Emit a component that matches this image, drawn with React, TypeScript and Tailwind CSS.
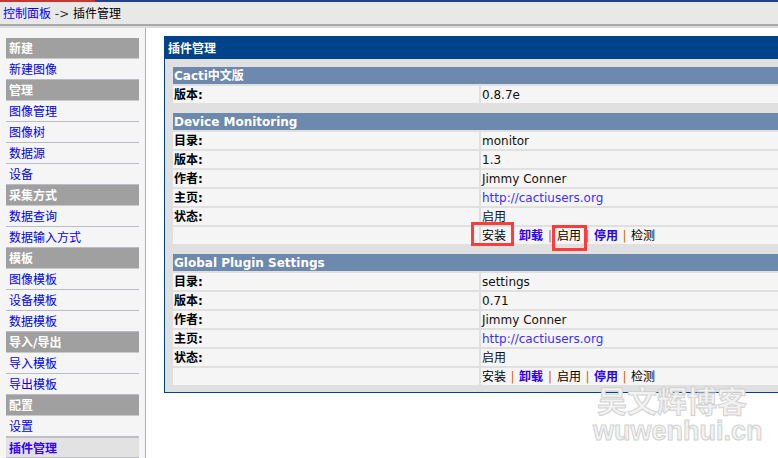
const menu: { label: string; head?: boolean; active?: boolean }[] = [
  { label: '新建', head: true },
  { label: '新建图像' },
  { label: '管理', head: true },
  { label: '图像管理' },
  { label: '图像树' },
  { label: '数据源' },
  { label: '设备' },
  { label: '采集方式', head: true },
  { label: '数据查询' },
  { label: '数据输入方式' },
  { label: '模板', head: true },
  { label: '图像模板' },
  { label: '设备模板' },
  { label: '数据模板' },
  { label: '导入/导出', head: true },
  { label: '导入模板' },
  { label: '导出模板' },
  { label: '配置', head: true },
  { label: '设置' },
  { label: '插件管理', active: true },
];

type Row = { label: string; value?: string; link?: boolean };

const sections: { title: string; rows: Row[]; actions?: boolean }[] = [
  { title: 'Cacti中文版', rows: [{ label: '版本:', value: '0.8.7e' }] },
  {
    title: 'Device Monitoring',
    rows: [
      { label: '目录:', value: 'monitor' },
      { label: '版本:', value: '1.3' },
      { label: '作者:', value: 'Jimmy Conner' },
      { label: '主页:', value: 'http://cactiusers.org', link: true },
      { label: '状态:', value: '启用' },
    ],
    actions: true,
  },
  {
    title: 'Global Plugin Settings',
    rows: [
      { label: '目录:', value: 'settings' },
      { label: '版本:', value: '0.71' },
      { label: '作者:', value: 'Jimmy Conner' },
      { label: '主页:', value: 'http://cactiusers.org', link: true },
      { label: '状态:', value: '启用' },
    ],
    actions: true,
  },
];

function Sep({ w }: { w: string }) {
  return <span className={`inline-block text-center text-[#cc6600] ${w}`}>|</span>;
}

function Actions() {
  return (
    <span className="whitespace-nowrap">
      <span>安装</span>
      <Sep w="w-[13px]" />
      <span className="font-bold text-[#2a00f0]">卸载</span>
      <Sep w="w-[14px]" />
      <span>启用</span>
      <Sep w="w-[13px]" />
      <span className="font-bold text-[#2a00f0]">停用</span>
      <Sep w="w-[13px]" />
      <span>检测</span>
    </span>
  );
}

function Section({ title, rows, actions }: { title: string; rows: Row[]; actions?: boolean }) {
  return (
    <div className="flex flex-col gap-[2px]">
      <div className="h-[17px] bg-[#6d89ad] pl-[1px] pt-[1px] text-[12px] leading-[16px] font-bold text-white">{title}</div>
      {rows.map((r, i) => (
        <div key={i} className="flex gap-[2px] h-[17px] text-[12px] leading-[16px]">
          <div className="w-[306px] shrink-0 bg-[#f5f5f5] pl-[1px] pt-[1px] font-bold text-black">{r.label}</div>
          <div className={`flex-1 bg-[#f5f5f5] pl-[1px] pt-[1px] ${r.link ? 'text-[#3a30ff]' : 'text-[#111]'}`}>{r.value}</div>
        </div>
      ))}
      {actions && (
        <div className="flex gap-[2px] h-[17px] text-[12px] leading-[16px]">
          <div className="w-[306px] shrink-0 bg-[#f5f5f5]" />
          <div className="flex-1 bg-[#f5f5f5] pl-[1px] pt-[1px] text-black">
            <Actions />
          </div>
        </div>
      )}
    </div>
  );
}

export default function App() {
  return (
    <div className="relative w-[778px] h-[458px] overflow-hidden bg-white font-['DejaVu_Sans','Noto_Sans_CJK_SC',sans-serif] flex flex-col">
      <div className="flex h-[2px] shrink-0">
        <div className="w-[95px] bg-[#c8372d]" />
        <div className="flex-1 bg-[#23428e]" />
      </div>
      <div className="h-[22px] shrink-0 bg-[#e8e8e8] pl-[3px] pt-[4px] text-[12px] leading-[16px] whitespace-pre">
        <span className="text-[#0000ff]">控制面板</span>
        <span className="text-[#333]"> -&gt; </span>
        <span className="text-black">插件管理</span>
      </div>
      <div className="h-[2px] shrink-0 bg-[#a8a8a8]" />
      <div className="h-[2px] shrink-0 bg-[#dcdcdc]" />

      <div className="flex flex-1 min-h-0">
        <div className="w-[146px] shrink-0 bg-[#f5f5f5] border-r border-[#b0b0b0] pt-[10px] px-[6px]">
          {menu.map((m, i) =>
            m.head ? (
              <div key={i} className="h-[21px] bg-[#a0a0a0] border-b border-[#cacaca] pl-[3px] pt-[2px] text-[12px] leading-[18px] font-bold text-white">
                {m.label}
              </div>
            ) : (
              <div
                key={i}
                className={`h-[21px] border-b border-[#b8bcc4] pl-[3px] pt-[2px] text-[12px] leading-[18px] ${
                  m.active ? 'bg-[#e2e2e2] font-bold text-[#3300ff] border-t border-t-[#c0c0c0]' : 'text-[#0000ee]'
                }`}
              >
                {m.label}
              </div>
            )
          )}
        </div>

        <div className="flex-1 pl-[18px] pt-[8px]">
          <div className="w-[660px] border border-[#00438a]">
            <div className="h-[22px] bg-[#00438a] pl-[3px] pt-[2px] text-[12px] leading-[20px] font-bold text-white">插件管理</div>
            <div className="bg-[#e0e0e0] pt-[8px] pb-[7px] pl-[8px] flex flex-col gap-[10px]">
              {sections.map((s, i) => (
                <Section key={i} {...s} />
              ))}
            </div>
          </div>
        </div>
      </div>

      {/* annotation boxes */}
      <div className="absolute left-[471px] top-[222px] w-[43px] h-[24px] border-[3px] border-[#ff3b3b]" />
      <div className="absolute left-[552px] top-[225px] w-[35px] h-[26px] border-[3px] border-[#ff3b3b]" />

      {/* watermark */}
      <div className="absolute left-[597px] top-[385px] text-[30px] leading-[28px] font-bold text-[#f2f2f2] [-webkit-text-stroke:1px_#d2d2d2] font-['Noto_Sans_CJK_SC',sans-serif]">
        吴文辉博客
      </div>
      <div className="absolute left-[593px] top-[416px] text-[27px] leading-[30px] font-bold text-[#f2f2f2] [-webkit-text-stroke:1px_#d2d2d2] font-['Liberation_Sans',sans-serif]">
        wuwenhui.cn
      </div>
    </div>
  );
}
